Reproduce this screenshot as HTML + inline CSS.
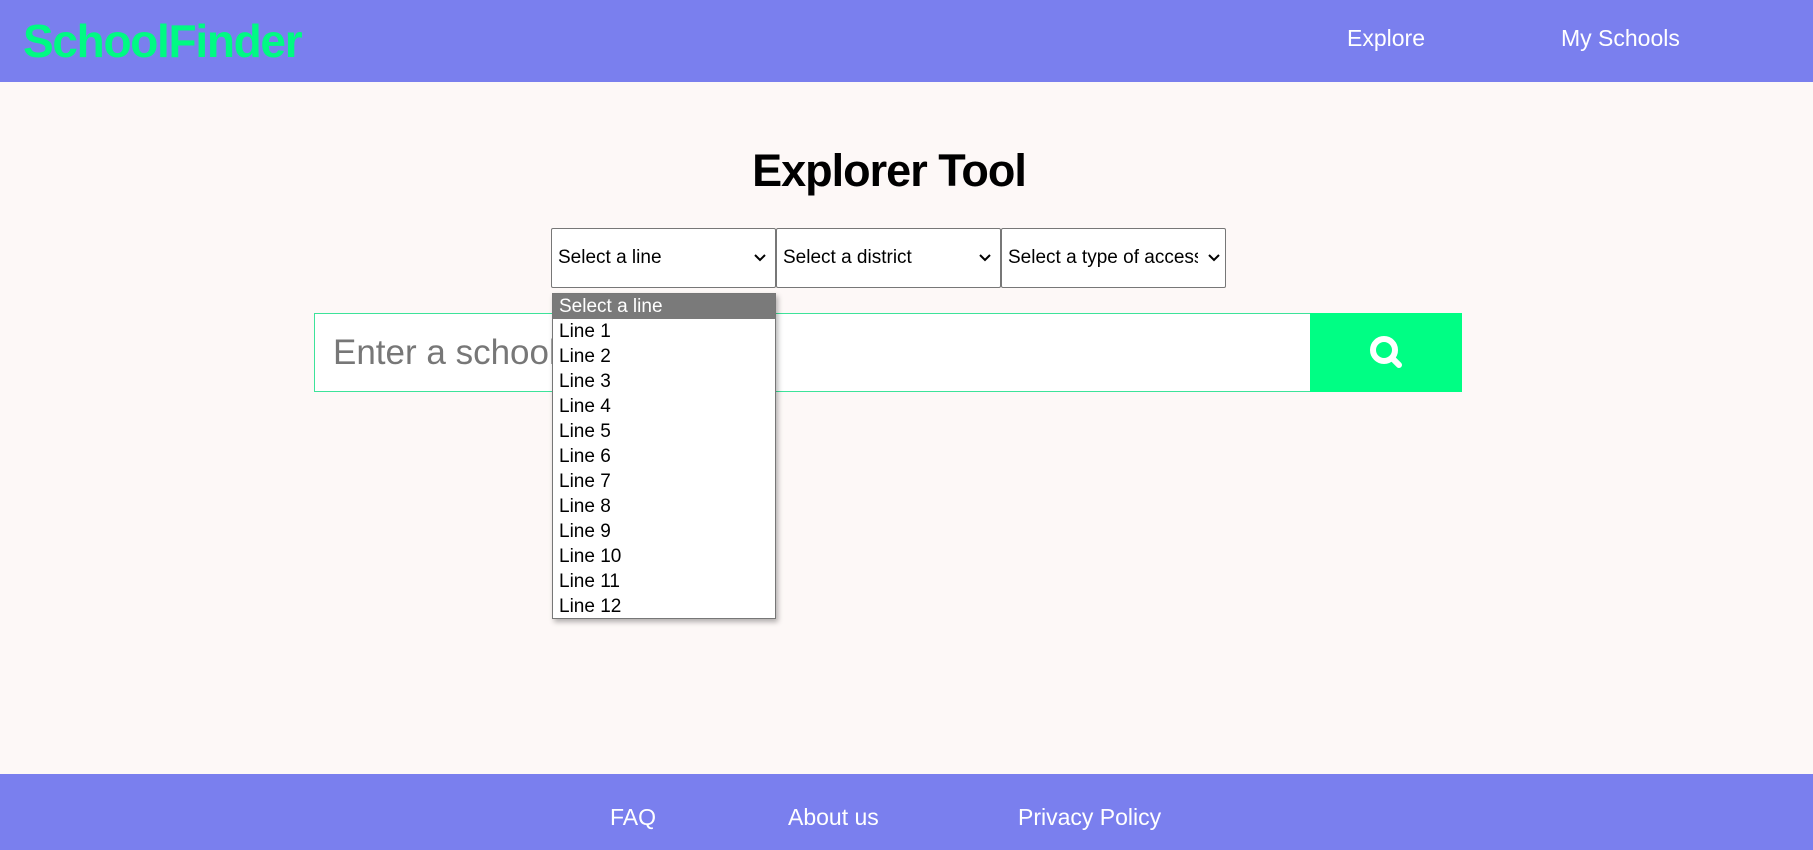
<!DOCTYPE html>
<html><head><meta charset="utf-8"><style>
*{margin:0;padding:0;box-sizing:border-box}
body{width:1813px;height:850px;background:#fdf8f7;font-family:"Liberation Sans",Arial,sans-serif;position:relative;overflow:hidden}
.hdr{position:absolute;left:0;top:0;width:1813px;height:82px;background:#7a7fee}
.logo{position:absolute;left:23px;top:14px;font-size:46px;font-weight:bold;color:#00fa83;letter-spacing:-1.3px}
.nav{position:absolute;top:25px;font-size:23px;color:#fff}
h1{position:absolute;left:0;width:1778px;text-align:center;top:145px;font-size:45px;font-weight:bold;color:#000;letter-spacing:-1px}
.sel{position:absolute;top:228px;height:60px;width:225px;border:1px solid #777;border-radius:2px;background:#fff;font-size:19px;color:#000;padding:18px 0 0 6px;white-space:nowrap;overflow:hidden}
.sel span.t{display:inline-block;width:190px;overflow:hidden}
.chev{position:absolute;right:8px;top:24px}
.inp{position:absolute;left:314px;top:313px;width:997px;height:79px;border:1px solid #3de39a;border-right:none;background:#fff}
.ph{position:absolute;left:18px;top:19px;font-size:35px;color:#777}
.btn{position:absolute;left:1310px;top:313px;width:152px;height:79px;background:#00fe84}
.dd{position:absolute;left:552px;top:293px;width:224px;height:326px;background:#fff;border:1px solid #777;box-shadow:2px 3px 5px rgba(0,0,0,.3)}
.dd div{height:25px;line-height:25px;font-size:19px;padding-left:6px;color:#000}
.dd div.a{background:#7a7a7a;color:#fff}
.ftr{position:absolute;left:0;top:774px;width:1813px;height:76px;background:#7a7fee}
.fl{position:absolute;top:30px;font-size:23px;color:#fff}
</style></head><body>
<div class="hdr">
<div class="logo">SchoolFinder</div>
<div class="nav" style="left:1347px">Explore</div>
<div class="nav" style="left:1561px">My Schools</div>
</div>
<h1>Explorer Tool</h1>
<div class="inp"><div class="ph">Enter a school</div></div>
<div class="btn"><svg width="152" height="79" viewBox="0 0 152 79"><circle cx="74" cy="37" r="11" fill="none" stroke="#fff" stroke-width="6"/><line x1="82" y1="45" x2="89" y2="52" stroke="#fff" stroke-width="6" stroke-linecap="round"/></svg></div>
<div class="sel" style="left:551px"><span class="t">Select a line</span><svg class="chev" width="14" height="10" viewBox="0 0 14 10"><path d="M2 2l5 5 5-5" fill="none" stroke="#000" stroke-width="2"/></svg></div>
<div class="sel" style="left:776px"><span class="t">Select a district</span><svg class="chev" width="14" height="10" viewBox="0 0 14 10"><path d="M2 2l5 5 5-5" fill="none" stroke="#000" stroke-width="2"/></svg></div>
<div class="sel" style="left:1001px"><span class="t" style="width:190px">Select a type of access</span><svg class="chev" width="14" height="10" viewBox="0 0 14 10" style="right:4px"><path d="M2 2l5 5 5-5" fill="none" stroke="#000" stroke-width="2"/></svg></div>
<div class="dd">
<div class="a">Select a line</div><div>Line 1</div><div>Line 2</div><div>Line 3</div><div>Line 4</div><div>Line 5</div><div>Line 6</div><div>Line 7</div><div>Line 8</div><div>Line 9</div><div>Line 10</div><div>Line 11</div><div>Line 12</div>
</div>
<div class="ftr">
<div class="fl" style="left:610px">FAQ</div>
<div class="fl" style="left:788px">About us</div>
<div class="fl" style="left:1018px">Privacy Policy</div>
</div>
</body></html>
